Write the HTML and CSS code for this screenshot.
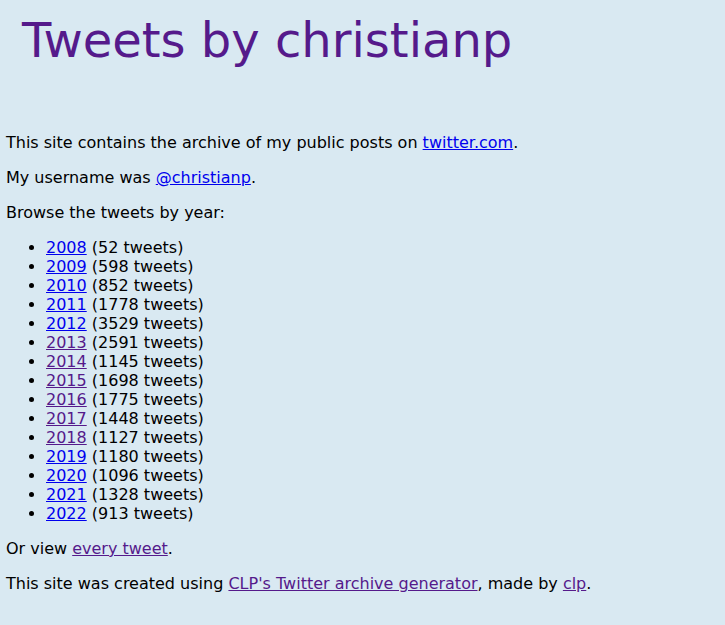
FILE: index.html
```html
<!DOCTYPE html>
<html lang="en">
<head>
<meta charset="utf-8">
<title>Tweets by christianp</title>
<link rel="stylesheet" href="styles.css">
</head>
<body>
<header class="site-header">
  <h1 class="site-title">Tweets by christianp</h1>
</header>
<main class="content">
  <p>This site contains the archive of my public posts on <a href="#">twitter.com</a>.</p>
  <p>My username was <a href="#">@christianp</a>.</p>
  <p>Browse the tweets by year:</p>
  <ul class="years">
    <li><a href="#">2008</a> (52 tweets)</li>
    <li><a href="#">2009</a> (598 tweets)</li>
    <li><a href="#">2010</a> (852 tweets)</li>
    <li><a href="#">2011</a> (1778 tweets)</li>
    <li><a href="#">2012</a> (3529 tweets)</li>
    <li><a class="visited" href="#">2013</a> (2591 tweets)</li>
    <li><a class="visited" href="#">2014</a> (1145 tweets)</li>
    <li><a class="visited" href="#">2015</a> (1698 tweets)</li>
    <li><a class="visited" href="#">2016</a> (1775 tweets)</li>
    <li><a class="visited" href="#">2017</a> (1448 tweets)</li>
    <li><a class="visited" href="#">2018</a> (1127 tweets)</li>
    <li><a href="#">2019</a> (1180 tweets)</li>
    <li><a href="#">2020</a> (1096 tweets)</li>
    <li><a href="#">2021</a> (1328 tweets)</li>
    <li><a href="#">2022</a> (913 tweets)</li>
  </ul>
  <p>Or view <a class="visited" href="#">every tweet</a>.</p>
  <p>This site was created using <a class="visited" href="#">CLP's Twitter archive generator</a>, made by <a class="visited" href="#">clp</a>.</p>
</main>
</body>
</html>
```

FILE: styles.css
```css
html {
  background: #d9e9f2;
}
body {
  margin: 0;
  padding: 0 6px;
  font-family: "DejaVu Sans", sans-serif;
  font-size: 16px;
  color: #000;
}
.site-header {
  padding: 0 16px;
}
.site-title {
  margin: 0;
  padding: 12px 0 49px;
  font-size: 48px;
  font-weight: normal;
  color: #551a8b;
}
.content p {
  margin: 16px 0;
}
a {
  color: #0000ee;
}
a.visited {
  color: #551a8b;
}
.years {
  margin: 16px 0;
  padding-left: 40px;
}
```
